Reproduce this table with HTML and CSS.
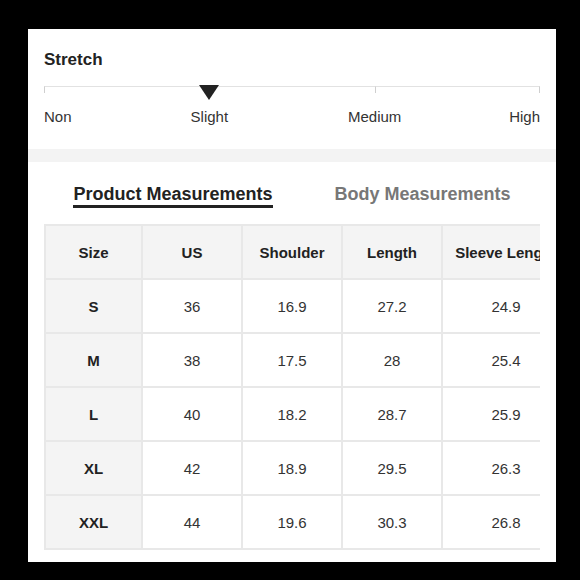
FILE: index.html
```html
<!DOCTYPE html>
<html>
<head>
<meta charset="utf-8">
<link rel="stylesheet" href="styles.css">
</head>
<body>
<div class="card">
  <div class="title">Stretch</div>
  <div class="scale">
    <div class="seg"></div><div class="seg"></div><div class="seg last"></div>
    <div class="marker"></div>
  </div>
  <div class="labels">
    <span class="l-non">Non</span>
    <span class="l-slight">Slight</span>
    <span class="l-medium">Medium</span>
    <span class="l-high">High</span>
  </div>
  <div class="band"></div>
  <div class="tabs">
    <span class="tab active">Product Measurements</span>
    <span class="tab">Body Measurements</span>
  </div>
  <div class="table-wrap">
    <div class="grid">
      <div class="c h">Size</div><div class="c h">US</div><div class="c h">Shoulder</div><div class="c h">Length</div><div class="c h">Sleeve Length</div>
      <div class="c s">S</div><div class="c">36</div><div class="c">16.9</div><div class="c">27.2</div><div class="c">24.9</div>
      <div class="c s">M</div><div class="c">38</div><div class="c">17.5</div><div class="c">28</div><div class="c">25.4</div>
      <div class="c s">L</div><div class="c">40</div><div class="c">18.2</div><div class="c">28.7</div><div class="c">25.9</div>
      <div class="c s">XL</div><div class="c">42</div><div class="c">18.9</div><div class="c">29.5</div><div class="c">26.3</div>
      <div class="c s">XXL</div><div class="c">44</div><div class="c">19.6</div><div class="c">30.3</div><div class="c">26.8</div>
    </div>
  </div>
</div>
</body>
</html>
```

FILE: styles.css
```css
html, body {
  margin: 0;
  padding: 0;
  background: #000;
  width: 580px;
  height: 580px;
  overflow: hidden;
}
body {
  font-family: "Liberation Sans", Arial, sans-serif;
  color: #222;
}
.card {
  margin: 29px 0 0 28px;
  width: 528px;
  height: 533px;
  box-sizing: border-box;
  background: #fff;
  padding: 21px 16px 0 16px;
  overflow: hidden;
}
.title {
  font-size: 17px;
  line-height: 20px;
  font-weight: bold;
  color: #222;
}
.scale {
  position: relative;
  margin-top: 16px;
  display: grid;
  grid-template-columns: 1fr 1fr 1fr;
  height: 7px;
}
.seg {
  border-top: 1px solid #e2e2e2;
  border-left: 1px solid #cfcfcf;
  height: 6px;
}
.seg.last {
  border-right: 1px solid #cfcfcf;
}
.marker {
  position: absolute;
  left: 33.333%;
  top: -1px;
  transform: translateX(-50%);
  width: 0;
  height: 0;
  border-left: 10.5px solid transparent;
  border-right: 10.5px solid transparent;
  border-top: 15px solid #222;
}
.labels {
  margin-top: 15px;
  display: grid;
  grid-template-columns: repeat(6, 1fr);
  font-size: 15px;
  line-height: 18px;
  color: #333;
}
.l-non { grid-column: 1; text-align: left; }
.l-slight { grid-column: 2 / 4; text-align: center; }
.l-medium { grid-column: 4 / 6; text-align: center; }
.l-high { grid-column: 6; text-align: right; }
.band {
  margin: 23px -16px 0 -16px;
  height: 13px;
  background: #f3f3f3;
}
.tabs {
  margin-top: 21px;
  display: flex;
  justify-content: center;
  gap: 62px;
  font-size: 18px;
  line-height: 22px;
  font-weight: bold;
}
.tab {
  color: #777;
  border-bottom: 3px solid transparent;
}
.tab.active {
  color: #222;
  border-bottom-color: #222;
}
.table-wrap {
  margin-top: 16px;
  width: 496px;
  overflow: hidden;
}
.grid {
  display: grid;
  grid-template-columns: 95px 98px 98px 98px 126px;
  grid-auto-rows: 52px;
  gap: 2px;
  padding: 2px 0 2px 2px;
  background: #e8e8e8;
  width: max-content;
}
.c {
  background: #fff;
  display: flex;
  align-items: center;
  justify-content: center;
  font-size: 15px;
  color: #333;
  white-space: nowrap;
}
.c.h {
  background: #f4f4f4;
  font-weight: bold;
  color: #222;
}
.c.s {
  background: #f4f4f4;
  font-weight: bold;
  color: #222;
}
```
